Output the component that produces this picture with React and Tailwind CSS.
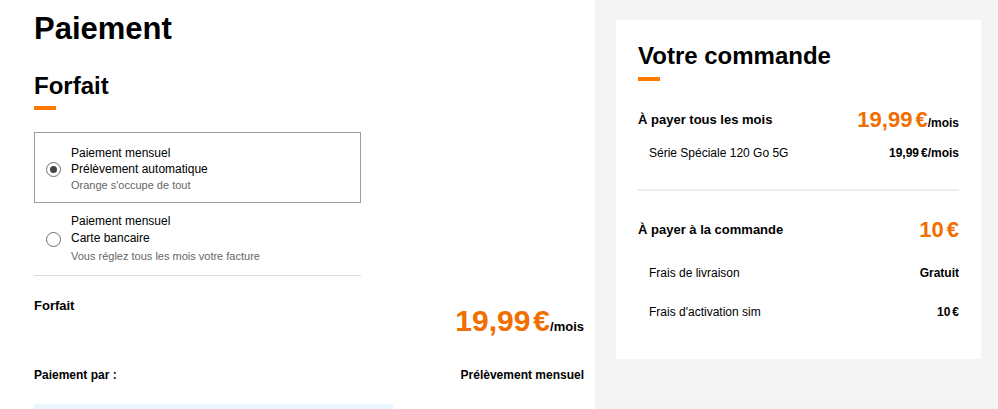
import React from "react";

function Radio({ checked }) {
  return (
    <span className="flex h-[15px] w-[15px] shrink-0 items-center justify-center rounded-full border-[1.5px] border-[#6e6e6e] bg-white">
      {checked && <span className="h-[7px] w-[7px] rounded-full bg-[#444]" />}
    </span>
  );
}

function Option({ checked, line1, line2, line3, boxed }) {
  return (
    <div
      className={
        "flex items-center gap-[10px] pl-[11px] " +
        (boxed
          ? "border border-[#9e9e9e] pt-[12px] pb-[8px]"
          : "border border-transparent pt-[9px] pb-[9px]")
      }
    >
      <Radio checked={checked} />
      <div className="flex flex-col text-black">
        <span className={"text-[12px] " + (boxed ? "leading-[16px]" : "leading-[17px]")}>{line1}</span>
        <span className={"text-[12px] " + (boxed ? "leading-[16px]" : "leading-[17px]")}>{line2}</span>
        <span className={"text-[11px] text-[#666] " + (boxed ? "leading-[17px]" : "leading-[18px]")}>{line3}</span>
      </div>
    </div>
  );
}

function Price({ value, size }) {
  const big = size === "big";
  return (
    <span
      className={
        "font-bold text-[#f16e00] " +
        (big ? "text-[30px] leading-[36px]" : "text-[22px] leading-[26px]")
      }
    >
      {value}
      <span className={big ? "ml-[3px]" : "ml-[3px]"}>€</span>
    </span>
  );
}

function SubRow({ label, value, className }) {
  return (
    <div className={"flex items-center justify-between pl-[11px] text-[12px] leading-[16px] " + className}>
      <span>{label}</span>
      <span className="font-bold">{value}</span>
    </div>
  );
}

export default function App() {
  return (
    <div
      className="flex h-[409px] w-[998px] overflow-hidden bg-white text-black"
      style={{ fontFamily: '"Liberation Sans", Arial, sans-serif' }}
    >
      {/* Left column */}
      <div className="flex w-[595px] shrink-0 flex-col pl-[34px] pr-[11px] pt-[11px] *:shrink-0">
        <h1 className="text-[31px] font-bold leading-[36px]">Paiement</h1>
        <h2 className="mt-[25px] text-[24px] font-bold leading-[28px]">Forfait</h2>
        <div className="mt-[6px] h-[4px] w-[22px] bg-[#ff7900]" />

        <div className="mt-[22px] flex w-[327px] flex-col">
          <Option
            boxed
            checked
            line1="Paiement mensuel"
            line2="Prélèvement automatique"
            line3="Orange s'occupe de tout"
          />
          <Option
            line1="Paiement mensuel"
            line2="Carte bancaire"
            line3="Vous réglez tous les mois votre facture"
          />
          <div className="h-px bg-[#dddddd]" />
        </div>

        <div className="mt-[21px] flex items-start justify-between">
          <span className="text-[13px] font-bold leading-[18px]">Forfait</span>
          <span className="mt-[6px] flex items-baseline">
            <Price value="19,99" size="big" />
            <span className="text-[13px] font-bold">/mois</span>
          </span>
        </div>

        <div className="mt-[28px] flex items-center justify-between text-[12px] font-bold leading-[16px]">
          <span>Paiement par :</span>
          <span>Prélèvement mensuel</span>
        </div>

        <div className="mt-[21px] h-[60px] w-[359px] bg-[#eaf6fd]" />
      </div>

      {/* Right column */}
      <div className="flex flex-1 items-start bg-[#f4f4f4] pl-[21px] pr-[17px] pt-[20px]">
        <div className="flex w-[365px] flex-col bg-white px-[22px] pb-[39px] pt-[22px] *:shrink-0">
          <h2 className="text-[24px] font-bold leading-[28px]">Votre commande</h2>
          <div className="mt-[7px] h-[4px] w-[22px] bg-[#ff7900]" />

          <div className="mt-[26px] flex items-center justify-between">
            <span className="text-[13px] font-bold leading-[18px]">À payer tous les mois</span>
            <span className="flex items-baseline">
              <Price value="19,99" />
              <span className="text-[12px] font-bold">/mois</span>
            </span>
          </div>
          <SubRow
            className="mt-[12px]"
            label="Série Spéciale 120 Go 5G"
            value={
              <>
                19,99<span className="ml-[2px]">€/mois</span>
              </>
            }
          />

          <div className="mt-[28px] h-[2px] bg-[#eeeeee]" />

          <div className="mt-[26px] flex items-center justify-between">
            <span className="text-[13px] font-bold leading-[18px]">À payer à la commande</span>
            <Price value="10" />
          </div>
          <SubRow className="mt-[22px]" label="Frais de livraison" value="Gratuit" />
          <SubRow
            className="mt-[23px]"
            label="Frais d'activation sim"
            value={
              <>
                10<span className="ml-[2px]">€</span>
              </>
            }
          />
        </div>
      </div>
    </div>
  );
}
